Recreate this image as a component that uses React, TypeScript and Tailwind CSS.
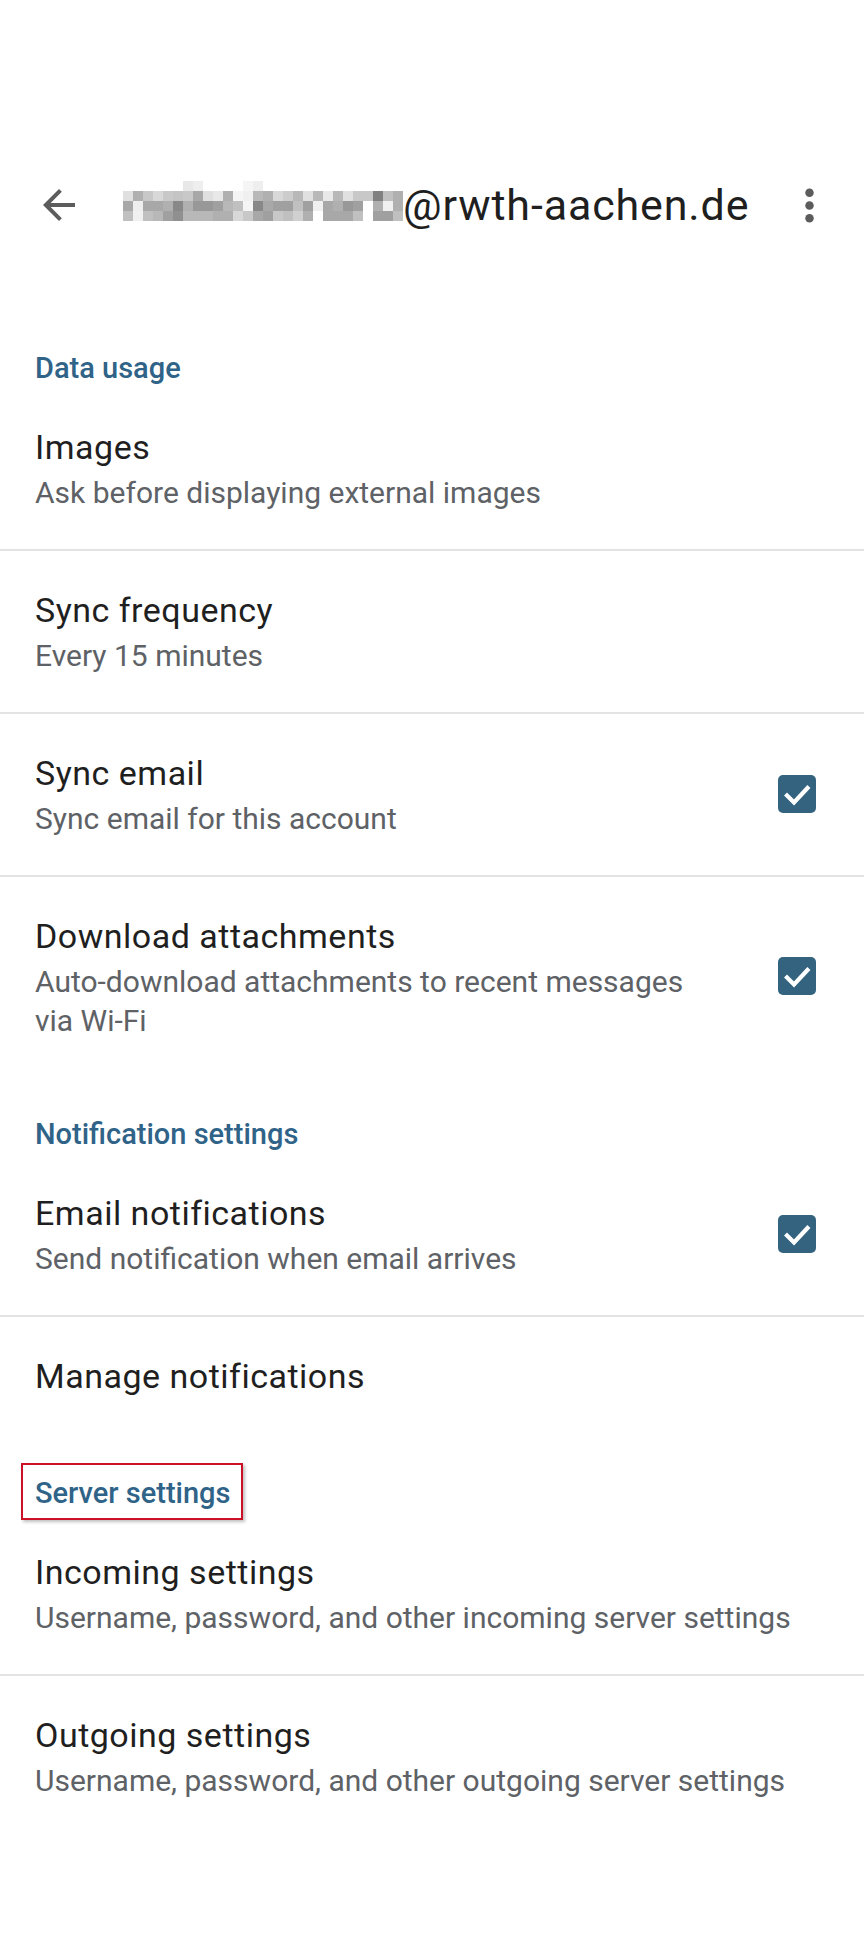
import React from "react";

const PIX: string[][] = [
  ["#fff","#fff","#fff","#fff","#fff","#fff","#e8e8e8","#eeeeee","#fff","#fff","#fff","#fff","#f5f5f5","#eeeeee","#fff","#fff","#fff","#fff","#fff","#fff","#fff","#fff","#fff","#fff","#fff","#fff","#fff","#fff"],
  ["#e0e0e0","#b0b0b0","#c8c8c8","#d8d8d8","#c8c8c8","#c4c4c4","#c8c8c8","#a8a8a8","#e0e0e0","#e8e8e8","#b0b0b0","#f5f5f5","#f0f0f0","#b8b8b8","#b0b0b0","#d8d8d8","#cccccc","#b8b8b8","#e0e0e0","#b8b8b8","#e8e8e8","#b8b8b8","#e0e0e0","#c8c8c8","#c8c8c8","#808080","#c0c0c0","#b0b0b0"],
  ["#a8a8a8","#eeeeee","#a8a8a8","#a8a8a8","#b0b0b0","#888888","#b0b0b0","#989898","#989898","#a0a0a0","#b8b8b8","#c0c0c0","#f5f5f5","#888888","#a8a8a8","#a0a0a0","#a0a0a0","#c0c0c0","#a0a0a0","#f0f0f0","#a8a8a8","#b0b0b0","#989898","#a0a0a0","#ffffff","#b0b0b0","#f0f0f0","#b0b0b0"],
  ["#c0c0c0","#f0f0f0","#c0c0c0","#b8b8b8","#a0a0a0","#909090","#b8b8b8","#b8b8b8","#b8b8b8","#b0b0b0","#b0b0b0","#d8d8d8","#c8c8c8","#a8a8a8","#a0a0a0","#c8c8c8","#c0c0c0","#d0d0d0","#b0b0b0","#ffffff","#a8a8a8","#a8a8a8","#a8a8a8","#c0c0c0","#ffffff","#a0a0a0","#a0a0a0","#c0c0c0"],
];

function Pixelated() {
  return (
    <svg width="280" height="40" viewBox="0 0 280 40" className="self-start mt-[4px] ml-[40px] shrink-0" shapeRendering="crispEdges">
      {PIX.map((row, r) =>
        row.map((c, i) => <rect key={`${r}-${i}`} x={i * 10} y={r * 10} width="10" height="10" fill={c} />)
      )}
    </svg>
  );
}

function Check() {
  return (
    <div className="w-[38px] h-[38px] rounded-[5px] bg-[#34637f] flex items-center justify-center shrink-0">
      <svg width="38" height="38" viewBox="0 0 38 38">
        <polyline points="9,20.5 16,27.5 29.5,13" fill="none" stroke="#ffffff" strokeWidth="4.2" strokeLinecap="square" strokeLinejoin="miter" />
      </svg>
    </div>
  );
}

function Divider() {
  return <div className="h-[2px] bg-[#e3e3e3] w-full" />;
}

function SectionHeader({ text, boxed, pt = "pt-[39px]" }: { text: string; boxed?: boolean; pt?: string }) {
  return (
    <div className={`${pt} pl-[35px]`}>
      <span className="relative inline-block text-[29px] leading-[40px] font-medium text-[#2f6388]">
        {text}
        {boxed && (
          <span className="absolute -left-[14px] -right-[13px] -top-[10px] -bottom-[7px] border-2 border-[#cc1025] shadow-[2px_2px_3px_rgba(0,0,0,0.25)]" />
        )}
      </span>
    </div>
  );
}

function Row({
  title,
  sub,
  checked,
  narrow,
  pb = "pb-[37px]",
}: {
  title: string;
  sub?: React.ReactNode;
  checked?: boolean;
  narrow?: boolean;
  pb?: string;
}) {
  return (
    <div className={`flex items-center pt-[35px] ${pb} pl-[35px]`}>
      <div className="flex-1 min-w-0">
        <div className="text-[34px] leading-[48px] tracking-[0.5px] text-[#1f1f1f]">{title}</div>
        {sub && (
          <div className={`mt-[2px] text-[30px] leading-[39px] text-[#5e6266] whitespace-normal ${narrow ? "max-w-[660px]" : ""}`}>{sub}</div>
        )}
      </div>
      {checked && (
        <div className="mr-[48px] ml-[20px]">
          <Check />
        </div>
      )}
    </div>
  );
}

export default function App() {
  return (
    <div className="w-full min-h-[1939px] bg-white" style={{ fontFamily: "Roboto, 'Noto Sans', sans-serif" }}>
      <div className="h-[309px]">
        <div className="pt-[177px] h-[233px] flex items-start">
          <div className="h-[56px] w-full flex items-center">
            <svg width="48" height="48" viewBox="0 0 24 24" className="ml-[35px] shrink-0" fill="#5c5c5c">
              <path d="M20 11H7.83l5.59-5.59L12 4l-8 8 8 8 1.41-1.41L7.83 13H20v-2z" />
            </svg>
            <Pixelated />
            <span className="text-[43px] leading-[56px] tracking-[0.02em] text-[#1f1f1f] whitespace-nowrap">@rwth-aachen.de</span>
            <svg width="51" height="51" viewBox="0 0 24 24" className="ml-auto mr-[29px] shrink-0" fill="#5c5c5c">
              <circle cx="12" cy="6" r="2" />
              <circle cx="12" cy="12" r="2" />
              <circle cx="12" cy="18" r="2" />
            </svg>
          </div>
        </div>
      </div>

      <SectionHeader text="Data usage" />
      <Row title="Images" sub="Ask before displaying external images" />
      <Divider />
      <Row title="Sync frequency" sub="Every 15 minutes" />
      <Divider />
      <Row title="Sync email" sub="Sync email for this account" checked />
      <Divider />
      <Row title="Download attachments" sub="Auto-download attachments to recent messages via Wi-Fi" checked narrow />

      <SectionHeader text="Notification settings" pt="pt-[37px]" />
      <Row title="Email notifications" sub="Send notification when email arrives" checked />
      <Divider />
      <Row title="Manage notifications" pb="pb-[35px]" />

      <SectionHeader text="Server settings" boxed pt="pt-[38px]" />
      <Row title="Incoming settings" sub="Username, password, and other incoming server settings" />
      <Divider />
      <Row title="Outgoing settings" sub="Username, password, and other outgoing server settings" />
    </div>
  );
}
